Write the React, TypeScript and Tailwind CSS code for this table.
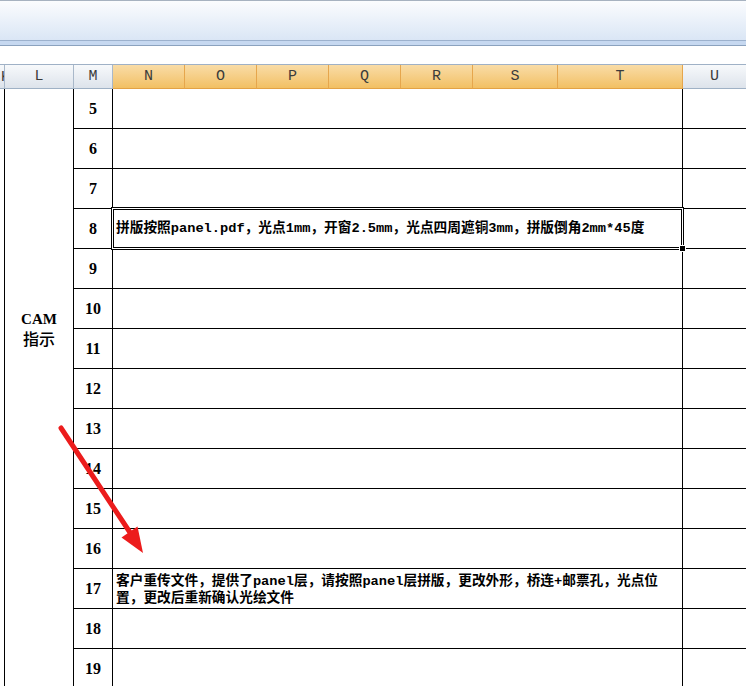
import React from "react";

const rows = [5, 6, 7, 8, 9, 10, 11, 12, 13, 14, 15, 16, 17, 18, 19];

const cellFont = {
  fontFamily: '"Liberation Mono", "Noto Sans CJK SC", monospace',
};

function HeaderCell({
  label,
  w,
  hi,
  last,
}: {
  label: string;
  w: string;
  hi?: boolean;
  last?: boolean;
}) {
  return (
    <div
      className={
        (hi
          ? "bg-gradient-to-b from-[#f9dca6] to-[#f2c063] border-b-[#e3a245] border-r-[#e6a64c] "
          : "bg-gradient-to-b from-[#f7f9fb] to-[#dde3eb] border-b-[#9fb1c5] border-r-[#a9b8c9] ") +
        (last ? "flex-1 border-b " : "border-r border-b ") +
        w +
        " h-full flex items-center justify-center pt-[2px] text-[15px] text-[#3b3b3b]"
      }
      style={{ fontFamily: '"Liberation Mono", monospace' }}
    >
      {label}
    </div>
  );
}

export default function App() {
  return (
    <div className="relative w-[746px] h-[686px] overflow-hidden bg-white">
      {/* toolbar */}
      <div className="h-[40px] border-t border-[#a7b2c0] bg-gradient-to-b from-[#fbfcfe] to-[#dae6f5]" />
      {/* band */}
      <div className="h-[6px] border-y border-t-[#9cb1cd] border-b-[#8ba2be] bg-[#c6d8f0]" />
      {/* formula area */}
      <div className="h-[18px] bg-white" />
      <div className="h-[1px] bg-[#9fb1c6]" />
      {/* header */}
      <div className="flex h-[24px]">
        <div className="w-[5px] h-full overflow-hidden border-r border-b border-r-[#a9b8c9] border-b-[#9fb1c5] bg-gradient-to-b from-[#f7f9fb] to-[#dde3eb] flex items-center justify-end pt-[2px]">
          <span
            className="text-[15px] leading-none text-[#3b3b3b] -mr-[6px]"
            style={{ fontFamily: '"Liberation Mono", monospace' }}
          >
            K
          </span>
        </div>
        <HeaderCell label="L" w="w-[69px]" />
        <HeaderCell label="M" w="w-[39px]" />
        <HeaderCell label="N" w="w-[72px]" hi />
        <HeaderCell label="O" w="w-[72px]" hi />
        <HeaderCell label="P" w="w-[72px]" hi />
        <HeaderCell label="Q" w="w-[72px]" hi />
        <HeaderCell label="R" w="w-[72px]" hi />
        <HeaderCell label="S" w="w-[85px]" hi />
        <HeaderCell label="T" w="w-[125px]" hi />
        <HeaderCell label="U" w="" last />
      </div>
      {/* body */}
      <div className="flex">
        <div className="w-[5px] border-r border-black" />
        <div className="w-[69px] border-r border-black">
          <div className="h-[480px] flex flex-col items-center justify-center text-black">
            <div
              className="text-[15px] font-bold leading-[19px]"
              style={{ fontFamily: '"Liberation Serif", serif' }}
            >
              CAM
            </div>
            <div
              className="text-[16px] font-medium leading-[19px]"
              style={{ fontFamily: '"Noto Sans CJK SC", sans-serif' }}
            >
              指示
            </div>
          </div>
        </div>
        <div className="flex-1 flex flex-col">
          {rows.map((r) => (
            <div key={r} className="flex h-[40px] border-b border-black">
              <div
                className="w-[39px] border-r border-black flex items-center justify-center pt-[1px] text-[16px] font-bold text-black"
                style={{ fontFamily: '"Liberation Serif", serif' }}
              >
                {r}
              </div>
              <div
                className="w-[570px] border-r border-black flex items-center pl-[3px] text-[13.7px] font-bold leading-[17px] text-black"
                style={cellFont}
              >
                {r === 8 && (
                  <span className="whitespace-nowrap">
                    拼版按照panel.pdf，光点1mm，开窗2.5mm，光点四周遮铜3mm，拼版倒角2mm*45度
                  </span>
                )}
                {r === 17 && (
                  <span className="whitespace-nowrap pt-[2px]">
                    客户重传文件，提供了panel层，请按照panel层拼版，更改外形，桥连+邮票孔，光点位
                    <br />
                    置，更改后重新确认光绘文件
                  </span>
                )}
              </div>
              <div className="flex-1" />
            </div>
          ))}
        </div>
      </div>

      {/* selection border on row 8 */}
      <div className="absolute left-[111px] top-[207px] w-[573px] h-[43px] border border-black pointer-events-none">
        <div className="w-full h-full border border-white">
          <div className="w-full h-full border border-black" />
        </div>
      </div>
      <div className="absolute left-[679px] top-[245px] w-[7px] h-[7px] bg-black border border-white" />

      {/* red arrow */}
      <svg
        className="absolute left-0 top-0 pointer-events-none"
        width="746"
        height="686"
        viewBox="0 0 746 686"
      >
        <line
          x1="61"
          y1="428"
          x2="131"
          y2="534"
          stroke="#ec1c1c"
          strokeWidth="5"
          strokeLinecap="round"
        />
        <polygon points="143,553 121.5,537.5 137.5,526.5" fill="#ec1c1c" />
      </svg>
    </div>
  );
}
